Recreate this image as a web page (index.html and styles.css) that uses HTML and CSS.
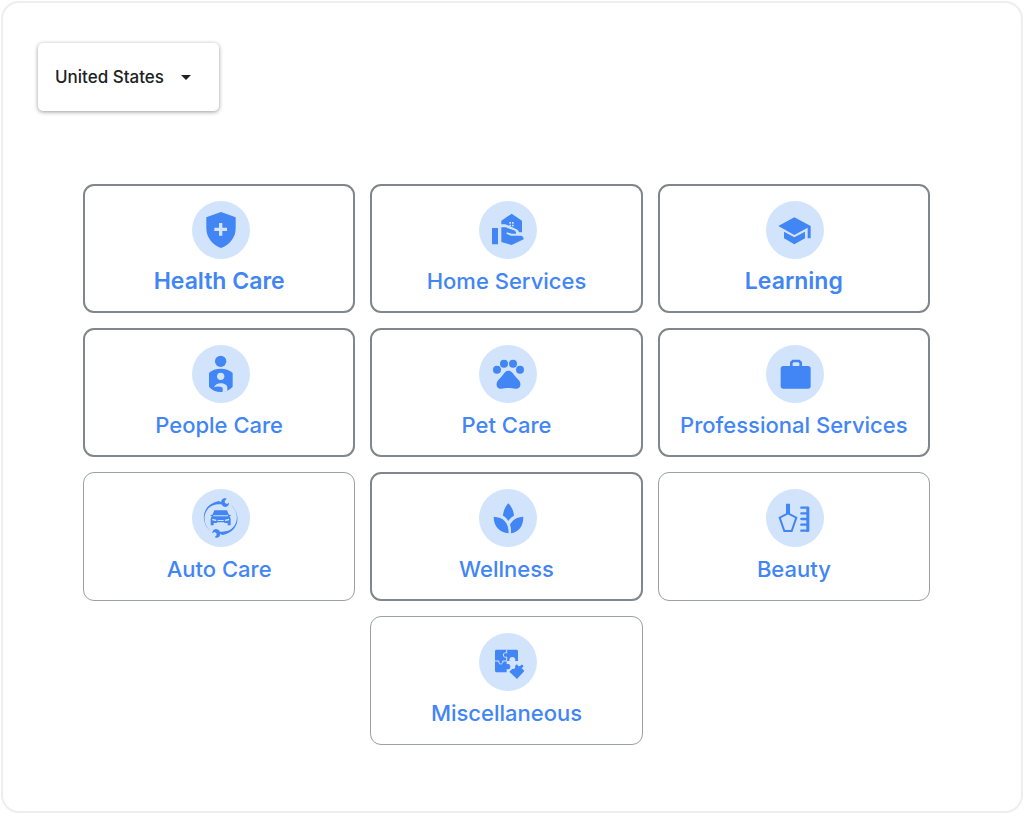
FILE: index.html
```html
<!DOCTYPE html>
<html lang="en">
<head>
  <meta charset="UTF-8" />
  <meta name="viewport" content="width=device-width, initial-scale=1" />
  <title>Service categories</title>
  <link rel="stylesheet" href="styles.css">
</head>
<body>
  <main class="panel">
    <div class="country">
      <select class="country-select" aria-label="Country">
        <option>United States</option>
      </select>
    </div>

    <nav class="categories" aria-label="Categories">
      <a class="card bold" href="#health-care">
        <svg class="icon" viewBox="0 0 174 174" aria-hidden="true">
          <path d="M87 33l44 16v33c0 28-19 51-44 59-25-8-44-31-44-59V49z"/>
          <path class="light" d="M81 66h10v14h14v10H91v14H81V90H67V80h14z"/>
        </svg>
        <span>Health Care</span>
      </a>
      <a class="card" href="#home-services">
        <svg class="icon" viewBox="0 0 174 174" aria-hidden="true">
          <path d="M39 81h18v49H39z"/>
          <path d="M67 59l31-21 31 21v35h-9c-1-5-4-8-9-10L85 72c-5-2-11-2-18-2z"/>
          <path d="M67 79h13l25 9c5 2 7 6 6 10H98l-14-4-2 4 14 6h28c6 0 10 4 10 11l-36 17-31-9z"/>
          <path class="light" d="M91 63h5v5h-5zM99 63h5v5h-5zM91 71h5v5h-5zM99 71h5v5h-5z"/>
        </svg>
        <span>Home Services</span>
      </a>
      <a class="card bold" href="#learning">
        <svg class="icon" viewBox="0 0 174 174" aria-hidden="true">
          <path d="M85 49l49 26v37h-9V80l-40 22-48-27z"/>
          <path d="M54 92l31 17 32-17v20l-32 18-31-18z"/>
        </svg>
        <span>Learning</span>
      </a>

      <a class="card" href="#people-care">
        <svg class="icon" viewBox="0 0 174 174" aria-hidden="true">
          <circle cx="86" cy="49" r="17"/>
          <path d="M51 84c8-9 21-13 35-13s28 4 36 13v41c-9 10-22 16-36 16s-27-6-35-16z"/>
          <circle class="light" cx="86" cy="94" r="11"/>
          <path class="light" d="M66 127c3-8 11-12 20-12 11 0 20 5 20 13v11l-14 3v-14c-9-4-18-4-26-1z"/>
        </svg>
        <span>People Care</span>
      </a>
      <a class="card" href="#pet-care">
        <svg class="icon" viewBox="0 0 174 174" aria-hidden="true">
          <circle cx="54" cy="74" r="12"/>
          <circle cx="75" cy="56" r="12"/>
          <circle cx="102" cy="56" r="12"/>
          <circle cx="123" cy="74" r="12"/>
          <path d="M88 77c8 0 12 5 17 12 5 6 9 10 14 16 4 5 6 10 5 16-1 7-7 11-14 10-8-1-14-2-22-2s-14 1-22 2c-7 1-12-3-13-10-1-6 1-11 5-16 5-6 9-10 14-16 5-7 8-12 16-12z"/>
        </svg>
        <span>Pet Care</span>
      </a>
      <a class="card" href="#professional-services">
        <svg class="icon" viewBox="0 0 174 174" aria-hidden="true">
          <rect x="44" y="63" width="90" height="68" rx="8"/>
          <path class="line" stroke-width="8" d="M76 66V53l5-5h18l5 5v13"/>
        </svg>
        <span>Professional Services</span>
      </a>

      <a class="card thin" href="#auto-care">
        <svg class="icon" viewBox="0 0 174 174" aria-hidden="true">
          <!-- the same tapered wrench twice, turned half way round the car -->
          <path d="M55 126C25 100 27 48 80 36l7 3 2-6c3-5 10-7 15-4l-6 7 1 6 6 3 6-4c1 6-4 12-10 13-6 0-10-3-13-8-18-1-32 3-42 16-14 20-11 45 9 64z"/>
          <path transform="rotate(180 86 87)" d="M55 126C25 100 27 48 80 36l7 3 2-6c3-5 10-7 15-4l-6 7 1 6 6 3 6-4c1 6-4 12-10 13-6 0-10-3-13-8-18-1-32 3-42 16-14 20-11 45 9 64z"/>
          <path d="M67 64h38l6 14 5-1v4l-4 1c3 3 4 6 4 10v17h-9v-7H65v7h-9V92c0-4 1-7 4-10l-4-1v-4l5 1z"/>
          <path class="light" d="M64 79h44v3H64zM61 89l12 3v5l-12-3zM111 89l-12 3v5l12-3zM77 93h18v3H77zM75 99h22v2H75z"/>
        </svg>
        <span>Auto Care</span>
      </a>
      <a class="card" href="#wellness">
        <svg class="icon" viewBox="0 0 174 174" aria-hidden="true">
          <path d="M88 43c10 11 16 23 17 37-7 4-13 9-17 16-4-7-9-12-16-16 1-14 6-26 16-37z"/>
          <path d="M44 83c29 1 45 18 45 50-28-3-45-21-45-50z"/>
          <path d="M133 83c0 29-14 46-37 50 0-10 0-18-3-26 8-15 21-23 40-24z"/>
        </svg>
        <span>Wellness</span>
      </a>
      <a class="card thin" href="#beauty">
        <svg class="icon" viewBox="0 0 174 174" aria-hidden="true">
          <path d="M60 44h12v31H60z"/>
          <path class="line" stroke-width="6" d="M66 73L41 86l14 40h22l14-40z"/>
          <path class="line" stroke-width="7" stroke-linecap="round" d="M106 56h19M106 73h18M106 90h18M106 107h18M106 125h19"/>
          <rect x="121" y="53" width="9" height="75" rx="3"/>
        </svg>
        <span>Beauty</span>
      </a>

      <a class="card thin last" href="#miscellaneous">
        <svg class="icon" viewBox="0 0 174 174" aria-hidden="true">
          <path d="M51 50h63l3 3v31h-9c3-5-1-12-8-12s-11 7-8 12h-9v10c7-3 11 2 11 7s-4 10-11 7v10H51l-3-3V53z"/>
          <path class="light-line" d="M83 50v10c-5-3-10 1-10 6s5 9 10 6v12M48 84h12c-2 5 1 9 5 9s8-4 6-9h12"/>
          <path d="M91 116l9-9c5 3 11-2 8-8l5-5 6 6c-2 7 5 12 11 7l6 7-22 24z"/>
          <path d="M117 100l7-1 2-4 6 1 1 6-5 3 2 6-9 3z"/>
        </svg>
        <span>Miscellaneous</span>
      </a>
    </nav>
  </main>
</body>
</html>
```
FILE: styles.css
```css
*, *::before, *::after { box-sizing: border-box; }
body {
  margin: 0;
  padding: 1px;
  background: #fff;
  font-family: Inter, "Open Sans", sans-serif;
}
.panel {
  padding: 40px 91px 66px 80px;
  border: 2px solid #eee;
  border-radius: 18px;
}

/* Country picker */
.country {
  position: relative;
  width: 181px;
  margin: 0 0 73px -45px;
}
.country::after {
  content: "";
  position: absolute;
  top: 32px;
  right: 28px;
  border: 5px solid transparent;
  border-top-color: #202124;
  border-bottom: 0;
  pointer-events: none;
}
.country-select {
  display: block;
  width: 100%;
  height: 68px;
  padding: 0 17px;
  appearance: none;
  border: 0;
  border-radius: 5px;
  background: #fff;
  box-shadow: 0 1px 4px rgba(0, 0, 0, 0.4);
  color: #202124;
  font-family: Inter, sans-serif;
  font-size: 17px;
  font-weight: 500;
}

/* Category cards */
.categories {
  display: grid;
  grid-template-columns: repeat(3, 1fr);
  gap: 15px;
}
.card {
  display: flex;
  flex-direction: column;
  align-items: center;
  gap: 7px;
  height: 129px;
  padding-top: 15px;
  border: 2px solid #80868b;
  border-radius: 11px;
  color: #4285f4;
  font-size: 22px;
  font-weight: 500;
  line-height: 31px;
  text-decoration: none;
  white-space: nowrap;
}
.card.bold {
  font-size: 23px;
  font-weight: 600;
}
.card.thin {
  padding-top: 16px;
  border: 1px solid #9aa0a6;
}
.card.last {
  grid-column: 2;
}
.icon {
  width: 58px;
  height: 58px;
  margin-left: 3px;
  border-radius: 50%;
  background: #d2e3fc;
  fill: #4285f4;
}
.icon .light {
  fill: #d2e3fc;
}
.icon .line {
  fill: none;
  stroke: #4285f4;
}
.icon .light-line {
  fill: none;
  stroke: #d2e3fc;
  stroke-width: 3;
}

@media (max-width: 860px) {
  .panel {
    padding: 40px 20px;
  }
  .country {
    margin: 0 0 40px;
  }
  .categories {
    grid-template-columns: 1fr;
  }
  .card.last {
    grid-column: auto;
  }
}
```
